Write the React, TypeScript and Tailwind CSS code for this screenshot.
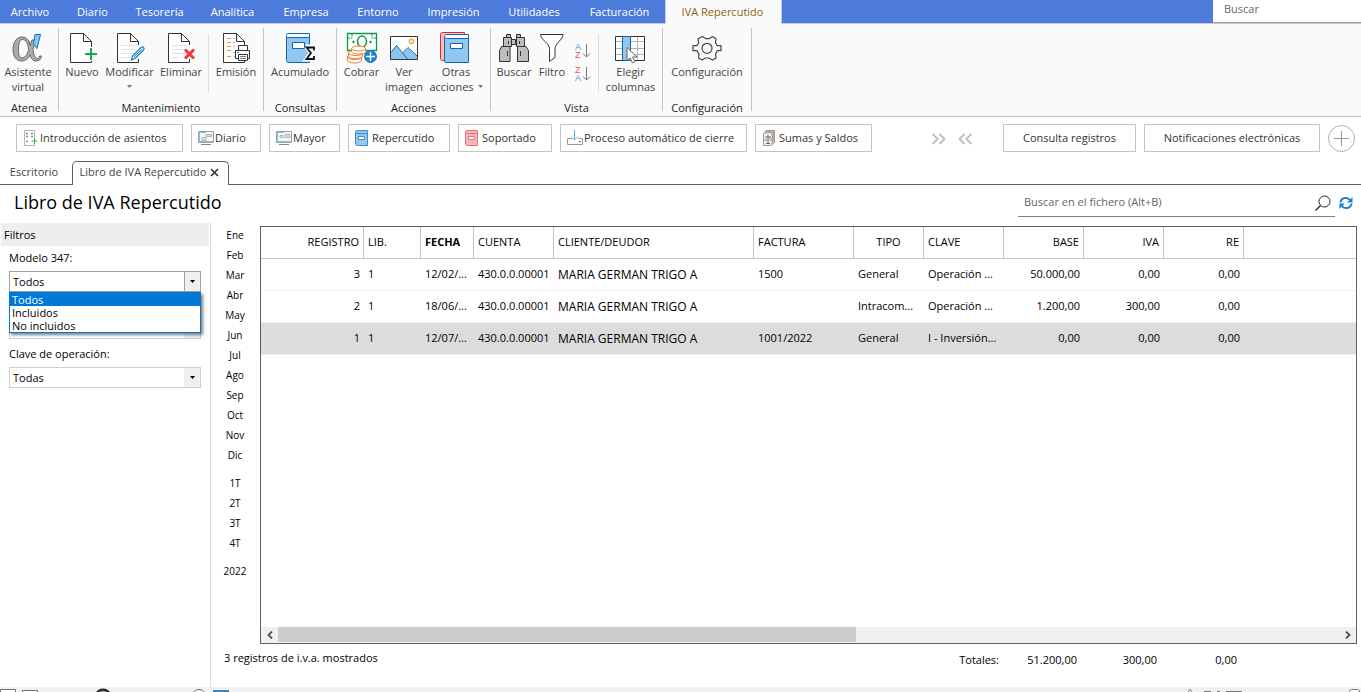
import type { ReactNode } from "react";

const menuTabs = [
  { label: "Archivo", width: "w-[62px]" },
  { label: "Diario", width: "w-[63px]" },
  { label: "Tesorería", width: "w-[71px]" },
  { label: "Analítica", width: "w-[75px]" },
  { label: "Empresa", width: "w-[72px]" },
  { label: "Entorno", width: "w-[72px]" },
  { label: "Impresión", width: "w-[79px]" },
  { label: "Utilidades", width: "w-[82px]" },
  { label: "Facturación", width: "w-[89px]" },
];

function Icon({ children, size = 32 }: { children: ReactNode; size?: number }) {
  return (
    <svg width={size} height={size} viewBox={`0 0 ${size} ${size}`} fill="none" aria-hidden="true" className="block shrink-0">
      {children}
    </svg>
  );
}

function Sheet() {
  return (
    <>
      <path d="M3.500 1.500H16.500L24.500 9.500V30.500H3.500Z" fill="#fff" />
      <path d="M24.500 13V9.500L16.500 1.500H3.500V30.500H24.500V27M16.500 1.500V9.500H24.500" stroke="#333" />
    </>
  );
}

const SheetLines = () => <path d="M7 13.500H21M7 17.500H21M7 21.500H21M7 25.500H16" stroke="#e2e2e2" />;

const AlphaIcon = () => (
  <Icon>
    <path
      d="M17.500 10C16 7 13.500 5 10 5 4.500 5 1 10.500 1 17.500S4.500 29 9.500 29c4 0 7-2.500 8.500-6 1 3.500 3 6 6 6 3.500 0 5-2 5.500-5h-2c0 1.500-.8 2.500-2 2.500-2.500 0-4-4.500-4.500-9L23.500 8h-3.500l-1.800 5.500ZM10.500 7.500C14 7.500 16.500 12 16.500 18c-1.500 5-3.500 8-6.500 8-3 0-3.500-4-3.500-9s1-9.500 4-9.500Z"
      fill="#aaa"
      stroke="#666"
      fillRule="evenodd"
    />
    <path d="M23 2.500h5.500l-3.500 14-3.500-4.500Z" fill="#8cc6ee" stroke="#1673b9" />
  </Icon>
);
const NewIcon = () => (
  <Icon>
    <path d="M4.500 1.500H17.500L25.500 9.500V30.500H4.500Z" fill="#fff" />
    <path d="M25.500 15V9.500L17.500 1.500H4.500V30.500H25.500V29M17.500 1.500V9.500H25.500" stroke="#333" />
    <path d="M25 16V28M19 22H31" stroke="#12a84b" strokeWidth="2" />
  </Icon>
);
const EditIcon = () => (
  <Icon>
    <Sheet />
    <SheetLines />
    <path d="m17.500 28 1-4L27 15.500c2-1.500 4 .5 2.500 2.500L21 26.500Z" fill="#e8f5fd" stroke="#1d82c8" strokeWidth="1.300" />
    <path d="m20 25 7.500-7.500" stroke="#1d82c8" />
  </Icon>
);
const DeleteIcon = () => (
  <Icon>
    <Sheet />
    <SheetLines />
    <path d="m20 17.500 9 9M29 17.500l-9 9" stroke="#ee3a3a" strokeWidth="3" />
  </Icon>
);
const PrintIcon = () => (
  <Icon>
    <Sheet />
    <path d="M7 6.500h4M7 10.500h4M7 14.500h4M7 18.500h4M7 24.500h4" stroke="#f09a2a" />
    <path d="M13 6.500h2M13 10.500h2M13 14.500h2M13 20.500h2M13 24.500h2" stroke="#bbb" />
    <path d="M15.500 18.500h14v8h-14Z" fill="#fff" stroke="#333" />
    <path d="M18.500 18V13.500h9V18" fill="#fff" stroke="#333" />
    <path d="M18.500 22.500h9v6h-9Z" fill="#fff" stroke="#333" />
    <path d="M20 24.500h6M20 26.500h6" stroke="#777" />
    <path d="M17 20.500h2" stroke="#1d82c8" />
  </Icon>
);
const BookSumIcon = () => (
  <Icon>
    <path d="M2.500 4v24.500c0 1 .5 2 2 2h21V5.500" fill="#92c8f0" stroke="#0f68b0" />
    <path d="M25.500 1.500H4C2 1.500 2 5.500 4 5.500h21.500Z" fill="#fff" stroke="#0f68b0" />
    <path d="M8.500 10.500h12v6h-12Z" fill="#fff" stroke="#0f68b0" />
    <path d="M22 14.500h8.500V18M30.500 24V27.500H22l5-6.500-5-6.500" stroke="#fff" strokeWidth="4" />
    <path d="M30 18.500v-3H22.500l4.500 5.500-4.500 6H30V24" stroke="#111" strokeWidth="1.800" />
  </Icon>
);
const CashIcon = () => (
  <Icon>
    <path d="M1.500 1.500h29v17h-29Z" fill="#fff" stroke="#12974a" strokeWidth="1.300" />
    <path d="M6 2v4H2M26 2v4h4" stroke="#12974a" strokeDasharray="2 1" />
    <ellipse cx="16" cy="9.500" rx="4.500" ry="5.500" stroke="#12974a" strokeWidth="1.500" />
    <circle cx="7.500" cy="10" r="1.200" fill="#12974a" />
    <circle cx="24.500" cy="10" r="1.200" fill="#12974a" />
    <g fill="#fff" stroke="#ee8033">
      <path d="M1.500 25v3c0 4 14 4 14 0v-3" />
      <ellipse cx="8.500" cy="25" rx="7" ry="2.500" />
      <path d="M2.500 21v3c0 3.500 14 3.500 14 0v-3" />
      <ellipse cx="9.500" cy="21" rx="7" ry="2.500" />
      <path d="M5.500 16.500v3c0 3.500 14 3.500 14 0v-3" />
      <ellipse cx="12.500" cy="16.500" rx="7" ry="2.500" />
    </g>
    <circle cx="24.500" cy="24.500" r="6.500" fill="#1c82c5" />
    <path d="M24.500 20v9M20 24.500h9" stroke="#fff" strokeWidth="1.500" />
  </Icon>
);
const PictureIcon = () => (
  <Icon>
    <path d="M2.500 4.500h27v23h-27Z" fill="#fff" />
    <path d="M3 20.500 8.500 13.500l6 8 5.500-5.500L29 24v3H3Z" fill="#8cc6ee" />
    <path d="M3 20.500 8.500 13.500 19.500 27M14.500 21l5.500-5.500L29 24" stroke="#0f68b0" />
    <circle cx="23.500" cy="9.500" r="2.500" fill="#ffe1a8" stroke="#ee8f33" />
    <path d="M2.500 4.500h27v23h-27Z" stroke="#333" />
  </Icon>
);
const BooksIcon = () => (
  <Icon>
    <path d="M5 28.500H2.500c-1 0-2-1-2-2V2.500C.5 1 1 .5 2.500.5h22v2H6" fill="#f8c0c0" stroke="#e0252b" />
    <path d="M4.500 5v24c0 1 .5 1.500 1.500 1.500h22.500V6.500" fill="#92c8f0" stroke="#0f68b0" />
    <path d="M28.500 2.500H6.500c-2.500 0-2.500 4 0 4h22Z" fill="#fff" stroke="#0f68b0" />
    <path d="M10.500 11.500h12v5h-12Z" fill="#fff" stroke="#0f68b0" />
  </Icon>
);
const BinocularsIcon = () => (
  <Icon>
    <g fill="#bdbdbd" stroke="#333">
      <path d="M13.500 7.500h4v5h-4Z" />
      <path d="M5.500 5.500h8v9h-8Z" />
      <path d="M18.500 5.500h8v9h-8Z" />
      <path d="M8.500 2.500h4v3h-4ZM18.500 2.500h4v3h-4Z" />
      <path d="M3.500 14.500h8.500v15H1.500v-11Z" />
      <path d="M19.500 14.500H28l2.500 4v11h-11Z" />
    </g>
    <path d="M9.500 19v5M22.500 19v5M10.500 9v3M21.500 9v3" stroke="#333" />
  </Icon>
);
const FunnelIcon = () => (
  <Icon>
    <path d="M4.500 2.500h22.500c0 5-8 9-8 14v9l-5.500 4v-13c0-5-9-9-9-14Z" fill="#fff" stroke="#333" />
  </Icon>
);
const ColumnsIcon = () => (
  <Icon>
    <path d="M.5 4.500h29v24h-29Z" fill="#fff" />
    <path d="M1 9.500h28M1 16.500h28M1 22.500h28M22.500 5v23" stroke="#b5b5b5" />
    <path d="M.5 4.500h29v24h-29Z" stroke="#333" />
    <path d="M7.500 4.500h8v24h-8Z" fill="#92c8f0" stroke="#0f68b0" />
    <path d="M12 15.500v13l3-2.500 2.500 5 2.500-1.500-2.500-4.500h4.500Z" fill="#fff" stroke="#666" />
  </Icon>
);
const GearIcon = () => (
  <Icon>
    <path
      d="M11.500 4.500l3.500 2.200h3l3.500-2.200 3.500 2.200-.5 4 1.800 3h3.700v5h-3.700l-1.800 3.500 .5 3.800-3.500 2-3.500-2h-3.500l-3.500 2-3.500-2 .5-3.800L6 18.700H2v-5h4l1.700-3-.7-4Z"
      stroke="#444"
      strokeWidth="1.200"
      strokeLinejoin="round"
    />
    <circle cx="16" cy="16.300" r="5" stroke="#444" strokeWidth="1.200" />
  </Icon>
);

function SortIcon({ first, second, flip = false }: { first: string; second: string; flip?: boolean }) {
  return (
    <svg width="16" height="16" viewBox="0 0 16 16" fill="none" aria-hidden="true" className="block">
      <text x="0" y="7" fontSize="9" fontFamily="Liberation Sans, sans-serif" fill={flip ? "#e8545a" : "#3f9ad8"}>{first}</text>
      <text x="0" y="15" fontSize="9" fontFamily="Liberation Sans, sans-serif" fill={flip ? "#3f9ad8" : "#e8545a"}>{second}</text>
      <path d="M11.500 1v13M8 10.500l3.500 3.500 3.500-3.500" stroke="#777" />
    </svg>
  );
}

function Caret() {
  return (
    <svg width="5" height="3" viewBox="0 0 5 3" aria-hidden="true" className="inline-block">
      <path d="M0 0h5L2.500 3Z" fill="#777" />
    </svg>
  );
}

function RibbonButton({ icon, width, children }: { icon: ReactNode; width: string; children: ReactNode }) {
  return (
    <button type="button" className={`flex shrink-0 flex-col items-center whitespace-nowrap text-center leading-[15px] ${width}`}>
      {icon}
      <span className="block">{children}</span>
    </button>
  );
}

function RibbonGroup({ title, children }: { title: string; children: ReactNode }) {
  return (
    <section className="flex shrink-0 flex-col justify-between border-r border-[#c4c4c4]">
      <div className="flex pt-1">{children}</div>
      <h2 className="text-center leading-[6px] text-[#222]">{title}</h2>
    </section>
  );
}

const Divider = () => <div className="mt-0.5 h-[58px] w-px shrink-0 bg-[#dcdcdc]" />;

function SmallBook({ light, dark }: { light: string; dark: string }) {
  return (
    <Icon size={16}>
      <path d="M.5 2v12c0 1 .5 1.500 1.500 1.500h10.500V3.500" fill={light} stroke={dark} />
      <path d="M12.500.5h-11c-1.300 0-1.300 3 0 3h11Z" fill={light} stroke={dark} />
      <path d="M3.500 6.500h6v3h-6Z" fill="#fff" stroke={dark} />
    </Icon>
  );
}
const EntryIcon = () => (
  <Icon size={16}>
    <path d="M1.500.5h10v15h-10Z" fill="#fff" stroke="#b5b5b5" />
    <path d="M3 3.500h2M8 3.500h2M3 6.500h2M8 6.500h2M3 11.500h2" stroke="#888" strokeWidth="1.500" />
    <path d="M11.500 8v6M8.500 11h6" stroke="#24b35c" />
  </Icon>
);
const LedgerIcon = ({ wide = false }: { wide?: boolean }) => (
  <Icon size={16}>
    <path d="M.5 1.500h15v11H.5Z" fill="#f6f6f6" stroke="#a0a0a0" />
    <path d="M1 2.500h7M1.500 2v10M2 11.500h13" stroke="#7fc4ea" />
    <path d={wide ? "M4 5.500h3v2H4ZM9 4.500h5v3H9Z" : "M4 7.500h4v3H4ZM8 4.500h6v2H8Z"} fill="#ddd" stroke="#b5b5b5" />
    <path d="M3 14.500h10" stroke="#888" />
  </Icon>
);
const ProcessIcon = () => (
  <Icon size={16}>
    <path d="M5 8.500H.5v6h15v-6H11" stroke="#999" />
    <path d="M7.500 0v10M4 6.500 7.500 10 11 6.500" stroke="#5ab0e0" />
    <path d="M12 11.500h2" stroke="#777" />
  </Icon>
);
const BalanceIcon = () => (
  <Icon size={16}>
    <path d="M1.500 3.500 4 .5h8.500v12l-3 3h-8Z" fill="#f4f4f4" stroke="#999" />
    <path d="M9.500 3.500 12 1v11l-2.500 3Z" fill="#aaa" />
    <path d="M1.500 3.500 4 1h8L9.500 3.500Z" fill="#aaa" />
    <path d="M6 5v8M3 7h6M4 13.500h4" stroke="#666" />
    <path d="M2.500 10h3M7 9.500h3" stroke="#eea468" strokeWidth="2" />
  </Icon>
);

const shortcuts: { label: string; width: string; icon: ReactNode }[] = [
  { label: "Introducción de asientos", width: "w-[167px]", icon: <EntryIcon /> },
  { label: "Diario", width: "w-[70px]", icon: <LedgerIcon /> },
  { label: "Mayor", width: "w-[71px]", icon: <LedgerIcon wide /> },
  { label: "Repercutido", width: "w-[102px]", icon: <SmallBook light="#92c8f0" dark="#3f8fcb" /> },
  { label: "Soportado", width: "w-[94px]", icon: <SmallBook light="#f5b8b8" dark="#ea7478" /> },
  { label: "Proceso automático de cierre", width: "w-[187px]", icon: <ProcessIcon /> },
  { label: "Sumas y Saldos", width: "w-[117px]", icon: <BalanceIcon /> },
];

const columns: { title: string; width?: string; right?: boolean; head?: string; cell?: string }[] = [
  { title: "REGISTRO", width: "w-[103px]", right: true },
  { title: "LIB.", width: "w-[57px]" },
  { title: "FECHA", width: "w-[53px]", head: "font-bold" },
  { title: "CUENTA", width: "w-[80px]" },
  { title: "CLIENTE/DEUDOR", width: "w-[200px]", cell: "text-[12px]" },
  { title: "FACTURA", width: "w-[100px]" },
  { title: "TIPO", width: "w-[70px]", head: "text-center" },
  { title: "CLAVE", width: "w-[80px]" },
  { title: "BASE", width: "w-[80px]", right: true },
  { title: "IVA", width: "w-[80px]", right: true },
  { title: "RE", width: "w-[80px]", right: true },
  { title: "" },
];

const rows = [
  ["3", "1", "12/02/...", "430.0.0.00001", "MARIA GERMAN TRIGO A", "1500", "General", "Operación ...", "50.000,00", "0,00", "0,00", ""],
  ["2", "1", "18/06/...", "430.0.0.00001", "MARIA GERMAN TRIGO A", "", "Intracom...", "Operación ...", "1.200,00", "300,00", "0,00", ""],
  ["1", "1", "12/07/...", "430.0.0.00001", "MARIA GERMAN TRIGO A", "1001/2022", "General", "I - Inversión...", "0,00", "0,00", "0,00", ""],
];

const periods = [
  ["Ene", "Feb", "Mar", "Abr", "May", "Jun", "Jul", "Ago", "Sep", "Oct", "Nov", "Dic"],
  ["1T", "2T", "3T", "4T"],
  ["2022"],
];

function Dropdown({ id, value, active = false }: { id: string; value: string; active?: boolean }) {
  return (
    <div className={`grid h-[21px] grid-cols-[1fr_16px] border bg-white ${active ? "border-[#a0a0a0]" : "border-[#d0d0d0]"}`}>
      <select id={id} aria-label={id} className="col-span-2 col-start-1 row-start-1 h-full w-full appearance-none pl-[3px] pt-px outline-none">
        <option>{value}</option>
      </select>
      <span
        className={`pointer-events-none col-start-2 row-start-1 flex items-center justify-center bg-[#f0f0f0] ${active ? "border-l border-[#a0a0a0]" : ""}`}
      >
        <svg width="5" height="3" viewBox="0 0 5 3" aria-hidden="true">
          <path d="M0 0h5L2.500 3Z" fill="#000" />
        </svg>
      </span>
    </div>
  );
}

function Sidebar() {
  return (
    <aside className="flex w-[211px] shrink-0 flex-col border-r border-[#dcdcdc] pl-px">
      <h2 className="mr-px h-[23px] bg-[#eee] pl-[3px] leading-[23px]">Filtros</h2>
      <div className="flex flex-col pl-2 pr-[9px]">
        <label htmlFor="modelo347" className="mt-1 h-[21px] leading-4">Modelo 347:</label>
        <div className="relative">
          <Dropdown id="modelo347" value="Todos" active />
          <ul role="listbox" className="absolute inset-x-0 top-full z-10 border border-[#0078d7] bg-white leading-[13px] shadow-[2px_2px_3px_rgba(0,0,0,0.5)]">
            <li role="option" aria-selected="true" className="bg-[#0078d7] pl-[2px] text-white">Todos</li>
            <li role="option" aria-selected="false" className="pl-[2px]">Incluidos</li>
            <li role="option" aria-selected="false" className="pl-[2px]">No incluidos</li>
          </ul>
        </div>
        <div className="mt-[26px]">
          <Dropdown id="tipo" value="" />
        </div>
        <label htmlFor="clave" className="mt-[7px] h-[21px] leading-4">Clave de operación:</label>
        <Dropdown id="clave" value="Todas" />
      </div>
    </aside>
  );
}

function Records() {
  return (
    <div className="flex min-h-0 flex-1 flex-col border border-[#5f5f5f]">
      <div className="min-h-0 flex-1 overflow-hidden">
        <table className="w-full table-fixed border-separate border-spacing-0 text-[11px]">
          <thead>
            <tr className="h-8">
              {columns.map((c) => (
                <th
                  key={c.title}
                  className={`whitespace-nowrap border-b border-r border-[#c4c4c4] px-1 last:border-r-0 ${c.width ?? ""} ${c.right ? "text-right" : c.head === "text-center" ? "" : "text-left"} ${c.head === "font-bold" ? "font-bold" : "font-normal"}`}
                >
                  {c.title}
                </th>
              ))}
            </tr>
          </thead>
          <tbody>
            {rows.map((row) => (
              <tr key={row[0]} className="h-8 last:bg-[#dcdcdc]">
                {row.map((cell, i) => (
                  <td
                    key={i}
                    className={`whitespace-nowrap border-b border-[#efefef] pl-1 ${columns[i].right ? "pr-1 text-right" : ""} ${columns[i].cell ?? ""}`}
                  >
                    {cell}
                  </td>
                ))}
              </tr>
            ))}
          </tbody>
        </table>
      </div>
      <div className="flex h-[16px] bg-[#f0f0f0]">
        <button type="button" aria-label="Izquierda" className="flex w-[17px] items-center justify-center">
          <svg width="6" height="8" viewBox="0 0 6 8" fill="none"><path d="M5 .5 1.500 4 5 7.500" stroke="#505050" strokeWidth="1.800" /></svg>
        </button>
        <div className="flex flex-1">
          <div className="h-[15px] w-[54.500%] bg-[#cdcdcd]" />
        </div>
        <button type="button" aria-label="Derecha" className="flex w-[17px] items-center justify-center">
          <svg width="6" height="8" viewBox="0 0 6 8" fill="none"><path d="M1 .5 4.500 4 1 7.500" stroke="#505050" strokeWidth="1.800" /></svg>
        </button>
      </div>
    </div>
  );
}

export default function App() {
  return (
    <div className="flex h-screen min-w-[1200px] flex-col overflow-hidden bg-white font-['Open_Sans','Noto_Sans',sans-serif] text-[11px] text-black">
      <nav className="flex h-6 shrink-0 border-b border-[#c8ccd6] bg-[#4d7bdb] text-white">
        {menuTabs.map((t) => (
          <button key={t.label} type="button" className={`shrink-0 pr-0.5 pt-px text-center ${t.width}`}>{t.label}</button>
        ))}
        <button type="button" className="-mb-px w-[117px] shrink-0 border-x border-[#c8ccd6] bg-[#fafafa] pr-0.5 text-[#8a6510]">IVA Repercutido</button>
        <input aria-label="Buscar" placeholder="Buscar" className="ml-auto h-[23px] w-[148px] border-b border-[#999] bg-white px-[11px] pb-[5px] text-[#555] outline-none placeholder:text-[#666]" />
      </nav>

      <div className="flex h-[93px] shrink-0 border-b border-[#c4c4c4] bg-[#fafafa] pt-1 pb-[5px] text-[#444]">
        <RibbonGroup title="Atenea">
          <RibbonButton width="w-[56px] mr-0.5" icon={<AlphaIcon />}>Asistente<br />virtual</RibbonButton>
        </RibbonGroup>
        <RibbonGroup title="Mantenimiento">
          <RibbonButton width="w-[46px]" icon={<NewIcon />}>Nuevo</RibbonButton>
          <RibbonButton width="w-[49px]" icon={<EditIcon />}>Modificar<br /><span className="flex h-[15px] items-center justify-center"><Caret /></span></RibbonButton>
          <RibbonButton width="w-[54px]" icon={<DeleteIcon />}>Eliminar</RibbonButton>
          <Divider />
          <RibbonButton width="w-[54px]" icon={<PrintIcon />}>Emisión</RibbonButton>
        </RibbonGroup>
        <RibbonGroup title="Consultas">
          <RibbonButton width="w-[72px]" icon={<BookSumIcon />}>Acumulado</RibbonButton>
        </RibbonGroup>
        <RibbonGroup title="Acciones">
          <RibbonButton width="w-[49px]" icon={<CashIcon />}>Cobrar</RibbonButton>
          <RibbonButton width="w-[36px]" icon={<PictureIcon />}>Ver<br />imagen</RibbonButton>
          <RibbonButton width="w-[68px]" icon={<BooksIcon />}>Otras<br /><span className="flex items-center gap-1">acciones <Caret /></span></RibbonButton>
        </RibbonGroup>
        <RibbonGroup title="Vista">
          <RibbonButton width="w-[46px]" icon={<BinocularsIcon />}>Buscar</RibbonButton>
          <RibbonButton width="w-[30px]" icon={<FunnelIcon />}>Filtro</RibbonButton>
          <div className="flex w-[31px] flex-col items-center gap-[7px] pt-[11px]">
            <button type="button" aria-label="Orden ascendente"><SortIcon first="A" second="Z" /></button>
            <button type="button" aria-label="Orden descendente"><SortIcon first="Z" second="A" flip /></button>
          </div>
          <Divider />
          <RibbonButton width="w-[63px]" icon={<ColumnsIcon />}>Elegir<br />columnas</RibbonButton>
        </RibbonGroup>
        <RibbonGroup title="Configuración">
          <RibbonButton width="w-[88px]" icon={<GearIcon />}>Configuración</RibbonButton>
        </RibbonGroup>
      </div>

      <div className="flex h-[44px] shrink-0 items-center gap-2 pb-0.5 pl-4 pr-[5px] text-[#333]">
        {shortcuts.map((s) => (
          <button key={s.label} type="button" className={`flex h-7 shrink-0 items-center gap-px whitespace-nowrap border border-[#c4c4c4] pl-1.5 ${s.width}`}>
            {s.icon}
            {s.label}
          </button>
        ))}
        <div className="ml-auto mr-[22px] flex gap-2.5">
          <button type="button" aria-label="Siguiente">
            <Icon size={16}><path d="m1.500 4 5 5-5 5M8.500 4l5 5-5 5" stroke="#c0c0c0" strokeWidth="2" /></Icon>
          </button>
          <button type="button" aria-label="Anterior">
            <Icon size={16}><path d="m7.500 4-5 5 5 5M14.500 4l-5 5 5 5" stroke="#c0c0c0" strokeWidth="2" /></Icon>
          </button>
        </div>
        <button type="button" className="h-7 w-[133px] shrink-0 border border-[#c4c4c4]">Consulta registros</button>
        <button type="button" className="h-7 w-[176px] shrink-0 border border-[#c4c4c4]">Notificaciones electrónicas</button>
        <button type="button" aria-label="Añadir">
          <Icon size={28}><circle cx="13.500" cy="14.500" r="13" stroke="#b0b0b0" /><path d="M13.500 7v15M6 14.500h15" stroke="#999" /></Icon>
        </button>
      </div>

      <div className="flex h-6 shrink-0 border-b border-[#5f5f5f] text-[#444]">
        <button type="button" className="w-[72px] shrink-0 pr-1">Escritorio</button>
        <div className="-mb-px flex w-[157px] shrink-0 items-center justify-center gap-1 rounded-t-[5px] border border-b-0 border-[#5f5f5f] bg-white pb-0.5 pr-0.5">
          <span className="whitespace-nowrap">Libro de IVA Repercutido</span>
          <button type="button" aria-label="Cerrar">
            <svg width="9" height="9" viewBox="0 0 9 9" className="block"><path d="m1 1 7 7M8 1 1 8" stroke="#333" strokeWidth="1.600" /></svg>
          </button>
        </div>
      </div>

      <header className="flex h-[38px] shrink-0 items-center justify-between pl-[14px] pr-2">
        <h1 className="pb-1 text-[18px]">Libro de IVA Repercutido</h1>
        <div className="flex items-center gap-1 pb-0.5">
          <label className="flex h-[27px] w-[317px] items-center border-b border-[#808080] pr-1">
            <input aria-label="Buscar en el fichero" placeholder="Buscar en el fichero (Alt+B)" className="min-w-0 flex-1 bg-transparent pl-1.5 outline-none placeholder:text-[#666]" />
            <Icon size={16}><circle cx="9.500" cy="6.500" r="5.500" stroke="#222" /><path d="M5.500 10.500.5 15.500" stroke="#222" strokeWidth="1.300" /></Icon>
          </label>
          <button type="button" aria-label="Actualizar">
            <Icon size={14}>
              <path d="M1.500 6.500C2 1.500 8.500.5 11 4M12.500 7.500C12 12.500 5.500 13.500 3 10" stroke="#1f83cc" strokeWidth="2" />
              <path d="M13.500 1v5.500H8ZM.5 13V7.500H6Z" fill="#1f83cc" />
            </Icon>
          </button>
        </div>
      </header>

      <div className="flex min-h-0 flex-1">
        <Sidebar />
        <main className="flex min-w-0 flex-1 flex-col pr-1 pt-0.5">
          <div className="flex min-h-0 flex-1">
            <div className="flex w-[49px] shrink-0 flex-col gap-2 pr-px text-[10px]">
              {periods.map((group) => (
                <div key={group[0]} className="flex flex-col">
                  {group.map((p) => (
                    <button key={p} type="button" className="h-5 leading-5">{p}</button>
                  ))}
                </div>
              ))}
            </div>
            <div className="flex min-w-0 flex-1 flex-col pt-px">
              <Records />
            </div>
          </div>
          <footer className="flex h-[43px] shrink-0 justify-between pl-[13px]">
            <p className="pt-1.5 leading-4">3 registros de i.v.a. mostrados</p>
            <div className="mr-[120px] flex pt-2 text-right leading-4">
              <span className="w-[80px]">Totales:</span>
              <span className="w-[78px]">51.200,00</span>
              <span className="w-[80px]">300,00</span>
              <span className="w-[80px]">0,00</span>
            </div>
          </footer>
        </main>
      </div>

      <div className="flex h-[5px] shrink-0 justify-between overflow-hidden bg-[#f0f0f0]">
        <svg width="240" height="5" viewBox="0 0 240 5" fill="none" aria-hidden="true">
          <path d="M.5 5V2.500h15V5M22.500 5V3.500h15V5" stroke="#707070" fill="#fff" />
          <circle cx="103" cy="10" r="7.500" stroke="#222" strokeWidth="2" fill="#999" />
          <circle cx="199" cy="9" r="6.500" stroke="#666" fill="#fff" />
          <path d="M213 3h16v2h-16Z" fill="#3a86c4" />
        </svg>
        <svg width="180" height="5" viewBox="0 0 180 5" fill="none" aria-hidden="true">
          <path d="m7 5 2-3 2 3" stroke="#888" />
          <path d="M23 4.500h7M36 4.500h3M45 4.500h16" stroke="#777" />
          <path d="M168.500 5c0-2 1-2.500 2-2.500h6c1 0 2 .5 2 2.500" stroke="#777" fill="#fff" />
        </svg>
      </div>
    </div>
  );
}
